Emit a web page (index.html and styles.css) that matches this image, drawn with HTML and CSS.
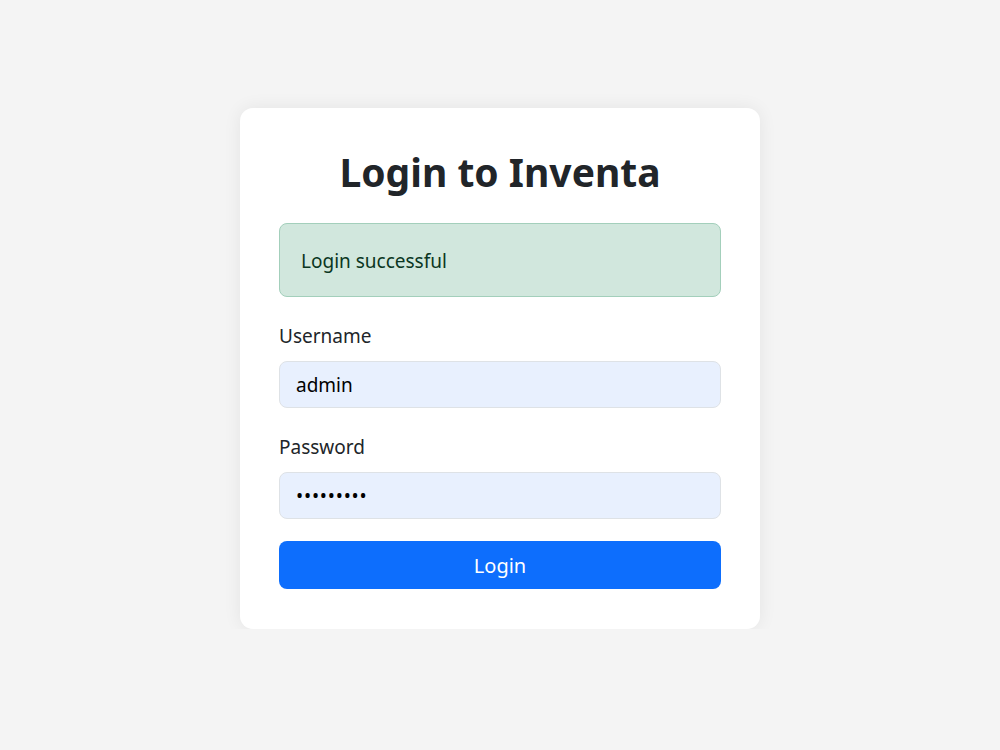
FILE: index.html
```html
<!DOCTYPE html>
<html lang="en">
<head>
    <meta charset="UTF-8">
    <meta name="viewport" content="width=device-width, initial-scale=1.0">
    <title>Login - Inventa</title>
    <link rel="stylesheet" href="styles.css">
</head>
<body>

    <div class="login-card">
        <h1>Login to Inventa</h1>

        <!-- Komunikat -->
        <div class="alert">Login successful</div>

        <form>
            <div class="field">
                <label for="username">Username</label>
                <input type="text" id="username" value="admin">
            </div>
            <div class="field">
                <label for="password">Password</label>
                <input type="password" id="password" class="secret" value="admin1234">
            </div>
            <button type="submit" class="button">Login</button>
        </form>
    </div>

</body>
</html>
```

FILE: styles.css
```css
body {
    font-family: "Noto Sans", "Open Sans", sans-serif;
    background-color: #f4f4f4;
    color: #212529;
    margin: 0;
    padding-top: 108px;
}
.login-card {
    width: 442px;
    margin: 0 auto;
    background-color: #fff;
    padding: 40px 39px;
    border-radius: 13px;
    box-shadow: 0 0 18px rgba(0, 0, 0, 0.07);
}
h1 {
    font-size: 39px;
    font-weight: 700;
    line-height: 48px;
    text-align: center;
    margin: 0 0 27px 0;
}
.alert {
    height: 72px;
    line-height: 74px;
    padding: 0 21px;
    font-size: 19px;
    color: #0a3622;
    background-color: #d1e7dd;
    border: 1px solid #a3cfbb;
    border-radius: 8px;
    margin-bottom: 24px;
}
.field {
    margin-bottom: 24px;
}
.field:last-of-type {
    margin-bottom: 22px;
}
.field label {
    display: block;
    font-size: 19px;
    line-height: 30px;
    margin-bottom: 10px;
}
.field input {
    display: block;
    box-sizing: border-box;
    width: 100%;
    height: 47px;
    padding: 0 16px;
    font-family: inherit;
    font-size: 19px;
    color: #000;
    background-color: #e8f0fe;
    border: 1px solid #dee2e6;
    border-radius: 8px;
    outline: none;
}
.field .secret {
    letter-spacing: 0.8px;
}
.button {
    display: block;
    width: 100%;
    height: 48px;
    font-family: inherit;
    font-size: 20px;
    color: #fff;
    background-color: #0d6efd;
    border: none;
    border-radius: 8px;
    cursor: pointer;
}
.button:hover {
    background-color: #0b5ed7;
}
```
